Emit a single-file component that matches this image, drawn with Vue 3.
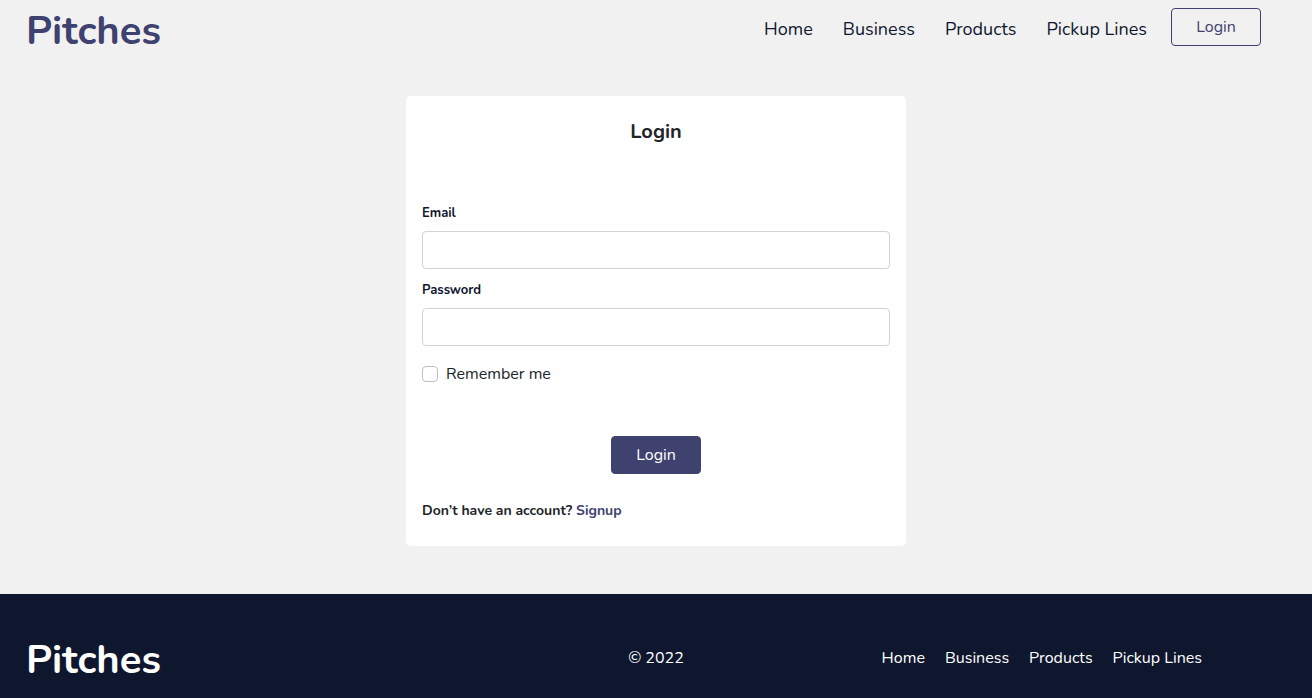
<script setup>
const links = ['Home', 'Business', 'Products', 'Pickup Lines']
</script>

<template>
  <div class="page">
    <header class="header">
      <a href="#" class="brand">Pitches</a>
      <nav class="nav">
        <a v-for="link in links" :key="link" href="#">{{ link }}</a>
      </nav>
      <button type="button" class="btn outline">Login</button>
    </header>

    <main class="main">
      <form class="card" @submit.prevent>
        <h1>Login</h1>
        <label class="label" for="email">Email</label>
        <input id="email" class="field" type="email" />
        <label class="label" for="password">Password</label>
        <input id="password" class="field" type="password" />
        <div class="remember">
          <input id="remember" type="checkbox" />
          <label for="remember">Remember me</label>
        </div>
        <button type="submit" class="btn solid">Login</button>
        <p class="signup">Don’t have an account? <a href="#">Signup</a></p>
      </form>
    </main>

    <footer class="footer">
      <a href="#" class="brand">Pitches</a>
      <span class="copy">© 2022</span>
      <nav class="foot-nav">
        <a v-for="link in links" :key="link" href="#">{{ link }}</a>
      </nav>
    </footer>
  </div>
</template>

<style>
body {
  margin: 0;
  background: #f1f1f1;
}
</style>

<style scoped>
.page {
  min-height: 100vh;
  display: flex;
  flex-direction: column;
  font-family: Nunito, Lato, "Open Sans", sans-serif;
  font-size: 16px;
  line-height: 24px;
  color: #212529;
}
.page * {
  box-sizing: border-box;
}
a {
  color: inherit;
  text-decoration: none;
}
.header {
  display: flex;
  align-items: flex-start;
  padding: 0 51px 0 26px;
}
.brand {
  font-size: 40px;
  line-height: 62px;
  font-weight: 700;
  color: #3f416f;
}
.nav {
  display: flex;
  gap: 30px;
  margin-left: auto;
  padding: 17px 24px 0 0;
  font-size: 18px;
  color: #0f172f;
}
.btn {
  width: 90px;
  height: 38px;
  padding: 0;
  border: 1px solid #3f416f;
  border-radius: 4px;
  font: inherit;
  cursor: pointer;
}
.outline {
  margin-top: 8px;
  background: transparent;
  color: #3f416f;
}
.solid {
  align-self: center;
  margin-top: 50px;
  background: #3f416f;
  color: #fff;
}
.main {
  display: flex;
  justify-content: center;
  padding: 34px 16px 48px;
}
.card {
  display: flex;
  flex-direction: column;
  width: 100%;
  max-width: 500px;
  padding: 24px 16px 23px;
  border-radius: 5px;
  background: #fff;
}
h1 {
  margin: 0 0 56px;
  text-align: center;
  font-size: 20px;
  line-height: 24px;
  font-weight: 700;
}
.label {
  font-size: 13px;
  line-height: 24px;
  margin: 1px 0 6px;
  font-weight: 700;
  color: #0f172f;
}
.field {
  width: 100%;
  height: 38px;
  margin-bottom: 8px;
  padding: 6px 12px;
  border: 1px solid #ced4da;
  border-radius: 4px;
  font: inherit;
  background: #fff;
}
.remember {
  display: flex;
  align-items: center;
  gap: 8px;
  margin-top: 8px;
}
.remember input {
  appearance: none;
  width: 16px;
  height: 16px;
  margin: 0;
  border: 1px solid #bfbfbf;
  border-radius: 4px;
  background: #fff;
}
.remember input:checked {
  background: #3f416f;
}
.signup {
  margin: 25px 0 0;
  font-size: 14px;
  font-weight: 700;
}
.signup a {
  color: #3f416f;
}
.footer {
  flex: 1;
  display: grid;
  grid-template-columns: 1fr auto 1fr;
  align-items: start;
  padding: 35px 26px 7px;
  background: #0f172f;
  color: #fff;
}
.footer .brand {
  color: #fff;
}
.copy {
  padding-top: 17px;
}
.foot-nav {
  display: flex;
  justify-content: flex-end;
  gap: 20px;
  padding: 17px 84px 0 0;
}
</style>
